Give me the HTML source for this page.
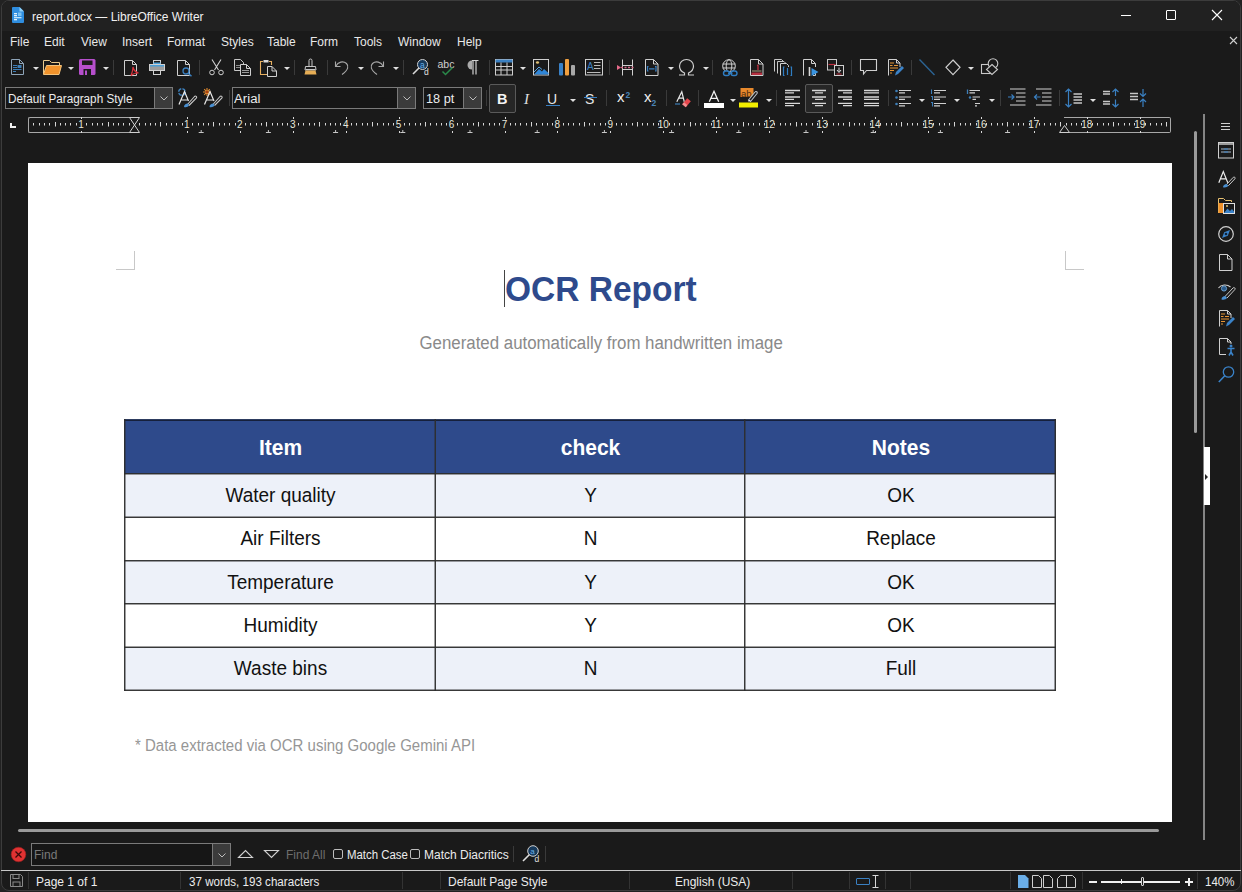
<!DOCTYPE html>
<html><head><meta charset="utf-8">
<style>
*{margin:0;padding:0;box-sizing:border-box}
html,body{width:1242px;height:892px;overflow:hidden;background:#222}
body{position:relative;font-family:"Liberation Sans",sans-serif;font-size:12px;color:#e6e6e6}
.a{position:absolute}
.t{position:absolute;white-space:pre;line-height:1}
#win{position:absolute;left:1px;top:0;width:1240px;height:891px;background:#1a1a1a;border:1px solid #3c3c3c;border-radius:8px;overflow:hidden}
#title{position:absolute;left:0;top:0;width:1242px;height:30px;background:#212121}
.menu{top:36px;font-size:12px;color:#e8e8e8}
.sep{position:absolute;width:1px;background:#3a3a3a}
.combo{position:absolute;border:1px solid #7a7a7a;background:#161616}
.dd{position:absolute;top:0;bottom:0;right:0;background:#3b3b3b;border-left:1px solid #7a7a7a}
.arr{position:absolute;width:0;height:0;border-left:3px solid transparent;border-right:3px solid transparent;border-top:3px solid #e0e0e0}
svg{position:absolute;overflow:visible}
.doc{font-family:"Liberation Sans",sans-serif;color:#000;transform:scaleY(1.055);transform-origin:50% 84.65%}
</style></head><body>
<div id="win">
  <div id="title"></div>
</div>
<div id="ui">
  <svg style="left:12px;top:7px" width="12" height="16" viewBox="0 0 12 16"><path d="M1 0h6.5L12 4.5V15a1 1 0 0 1-1 1H1a1 1 0 0 1-1-1V1a1 1 0 0 1 1-1z" fill="#2f8ee0"/><path d="M7.5 0V4.5H12z" fill="#8fd0f8"/><rect x="2" y="6" width="3" height="1.3" fill="#e0f2fe"/><rect x="2" y="8" width="3" height="1.3" fill="#e0f2fe"/><rect x="2" y="10" width="7.5" height="1.3" fill="#bfe4fc"/><rect x="2" y="12" width="3" height="1.3" fill="#e0f2fe"/><rect x="6" y="5.5" width="3.5" height="3.5" fill="#8fd0f8" opacity="0.8"/></svg>
  <div class="t" style="left:32px;top:11px;font-size:12px;color:#f0f0f0">report.docx — LibreOffice Writer</div>
  <div class="a" style="left:1121px;top:15px;width:10px;height:1px;background:#fff"></div>
  <div class="a" style="left:1166px;top:10px;width:10px;height:10px;border:1px solid #fff;border-radius:1px"></div>
  <svg style="left:1212px;top:10px" width="10" height="10"><path d="M0 0L10 10M10 0L0 10" stroke="#fff" stroke-width="1.1"/></svg>
  <svg style="left:1230px;top:37px" width="7" height="7"><path d="M0 0L7 7M7 0L0 7" stroke="#cfcfcf" stroke-width="1.1"/></svg>
  <div class="t menu" style="left:10px">File</div>
  <div class="t menu" style="left:44px">Edit</div>
  <div class="t menu" style="left:81px">View</div>
  <div class="t menu" style="left:122px">Insert</div>
  <div class="t menu" style="left:167px">Format</div>
  <div class="t menu" style="left:221px">Styles</div>
  <div class="t menu" style="left:267px">Table</div>
  <div class="t menu" style="left:310px">Form</div>
  <div class="t menu" style="left:354px">Tools</div>
  <div class="t menu" style="left:398px">Window</div>
  <div class="t menu" style="left:457px">Help</div>
  <!-- TOOLBAR 1 -->
  <svg style="left:11px;top:59px" width="14" height="17" viewBox="0 0 14 17" fill="none"><path d="M0.5 0.5H8.5L12.5 4.5V15.5H0.5Z" stroke="#8ea4b8"/><path d="M8.5 0.5V4.5H12.5" stroke="#8ea4b8"/><path d="M2 6.5H6M2 8.5H6M2 10.5H10.5M2 12.5H5" stroke="#3d7eb8" stroke-width="1"/><rect x="6.5" y="6" width="4" height="3" fill="#3d7eb8"/></svg>
  <div class="arr" style="left:33px;top:67px"></div>
  <svg style="left:43px;top:60px" width="19" height="15" viewBox="0 0 19 15" fill="none"><path d="M0.5 14V0.5H6.5L8.5 2.5H16.5V5" stroke="#e9c98c"/><path d="M3.5 5.5H18.5L16 14.5H0.5Z" fill="#f0922b" stroke="#f3c27a"/></svg>
  <div class="arr" style="left:68px;top:67px"></div>
  <svg style="left:79px;top:59px" width="17" height="17" viewBox="0 0 17 17"><rect x="0" y="0" width="16.5" height="16" rx="1.5" fill="#b64fcc"/><rect x="3" y="1.5" width="10.5" height="4.5" fill="#1b1b1b"/><rect x="4.5" y="10" width="7.5" height="6" fill="#1b1b1b"/><rect x="6" y="11.5" width="2" height="4.5" fill="#b64fcc"/></svg>
  <div class="arr" style="left:103px;top:67px"></div>
  <div class="sep" style="left:113px;top:60px;height:15px"></div>
  <svg style="left:124px;top:60px" width="15" height="16" viewBox="0 0 15 16" fill="none"><path d="M0.5 0.5H8.5L12.5 4.5V15.5H0.5Z" stroke="#d0d0d0"/><path d="M8.5 0.5V4.5H12.5" stroke="#d0d0d0"/><path d="M9 7C9.5 9 11 12 14.5 13C12 13 9 13.5 7 15.5C8 13 9 10 9 7Z" stroke="#d8313b" stroke-width="1.2"/></svg>
  <svg style="left:149px;top:60px" width="16" height="15" viewBox="0 0 16 15" fill="none"><rect x="4.5" y="0.5" width="7" height="4" stroke="#d0d0d0"/><rect x="4.5" y="2.5" width="7" height="2" fill="#4a9fd8"/><rect x="0.5" y="4.5" width="15" height="6" fill="#9c9c9c" stroke="#d0d0d0"/><rect x="1" y="5" width="14" height="1.5" fill="#4a9fd8"/><rect x="4.5" y="10.5" width="7" height="4" stroke="#d0d0d0"/></svg>
  <svg style="left:177px;top:60px" width="16" height="17" viewBox="0 0 16 17" fill="none"><path d="M0.5 0.5H8.5L12.5 4.5V15.5H0.5Z" stroke="#d0d0d0"/><path d="M8.5 0.5V4.5H12.5" stroke="#d0d0d0"/><circle cx="9" cy="11" r="3" stroke="#3a80c2" stroke-width="1.3" fill="#1b1b1b"/><path d="M11.2 13.2L14.5 16.3" stroke="#3a80c2" stroke-width="1.5"/></svg>
  <div class="sep" style="left:199px;top:60px;height:15px"></div>
  <svg style="left:209px;top:59px" width="15" height="17" viewBox="0 0 15 17" fill="none"><path d="M3 0.5L9.5 11M12 0.5L5.5 11" stroke="#d0d0d0" stroke-width="1.1"/><circle cx="3" cy="13.5" r="2.3" stroke="#d0d0d0"/><circle cx="12" cy="13.5" r="2.3" stroke="#d0d0d0"/></svg>
  <svg style="left:234px;top:59px" width="17" height="17" viewBox="0 0 17 17" fill="none"><path d="M0.5 0.5H6.5L9.5 3.5V11.5H0.5Z" stroke="#c8c8c8"/><rect x="2" y="6" width="5" height="1" fill="#8a8a8a"/><rect x="2" y="8" width="5" height="1" fill="#8a8a8a"/><path d="M6.5 5.5H12.5L16.5 9.5V16.5H6.5Z" fill="#1b1b1b" stroke="#d0d0d0"/><path d="M12.5 5.5V9.5H16.5" stroke="#d0d0d0"/><rect x="8" y="11" width="7" height="1" fill="#9a9a9a"/><rect x="8" y="13" width="7" height="1" fill="#9a9a9a"/></svg>
  <svg style="left:260px;top:59px" width="17" height="18" viewBox="0 0 17 18" fill="none"><path d="M3 2.5H0.5V15.5H7M11.5 6V2.5H9" stroke="#e8b060" stroke-width="1.1"/><rect x="3.5" y="1" width="5" height="2.5" fill="#d8d8d8"/><path d="M7.5 7.5H12L16.5 12V17.5H7.5Z" fill="#1b1b1b" stroke="#d0d0d0"/><path d="M12 7.5V12H16.5" stroke="#d0d0d0"/></svg>
  <div class="arr" style="left:284px;top:67px"></div>
  <div class="sep" style="left:294px;top:60px;height:15px"></div>
  <svg style="left:304px;top:58px" width="13" height="18" viewBox="0 0 13 18" fill="none"><path d="M5 8V2.5A1.5 1.5 0 0 1 8 2.5V8" stroke="#c8c8c8"/><path d="M1.5 8.5H11.5L12 12H1Z" stroke="#c8c8c8"/><path d="M1.5 12.5L0.5 16.5H12.5L11.5 12.5Z" fill="#e6ad55"/><rect x="2" y="11" width="9" height="1" fill="#c8c8c8"/></svg>
  <div class="sep" style="left:327px;top:60px;height:15px"></div>
  <svg style="left:334px;top:60px" width="15" height="15" viewBox="0 0 15 15" fill="none"><path d="M1.5 1.5V6.5H6.5" stroke="#a8a8a8" stroke-width="1.1"/><path d="M1.8 6.2C4 2 9 0.5 12.5 3.5C15 6 14.5 9.5 8 14.5" stroke="#a8a8a8" stroke-width="1.1"/></svg>
  <div class="arr" style="left:358px;top:67px"></div>
  <svg style="left:370px;top:60px" width="15" height="15" viewBox="0 0 15 15" fill="none"><path d="M13.5 1.5V6.5H8.5" stroke="#a8a8a8" stroke-width="1.1"/><path d="M13.2 6.2C11 2 6 0.5 2.5 3.5C0 6 0.5 9.5 7 14.5" stroke="#a8a8a8" stroke-width="1.1"/></svg>
  <div class="arr" style="left:393px;top:67px"></div>
  <div class="sep" style="left:403px;top:60px;height:15px"></div>
  <svg style="left:412px;top:59px" width="18" height="17" viewBox="0 0 18 17" fill="none"><circle cx="10.5" cy="5.5" r="5" stroke="#d0d0d0" fill="#173a5c"/><path d="M7 9L1 15" stroke="#d8d8d8" stroke-width="1.6"/><text x="8" y="8.5" font-size="8.5" fill="#6ab0e8" font-family="Liberation Sans">a</text><text x="12" y="16" font-size="8.5" fill="#e0e0e0" font-family="Liberation Sans">d</text></svg>
  <svg style="left:437px;top:59px" width="18" height="17" viewBox="0 0 18 17" fill="none"><text x="0.5" y="8.5" font-size="10.5" fill="#d0d0d0" font-family="Liberation Sans">abc</text><path d="M5.5 12.5L8.5 15.5L15.5 8.5" stroke="#2a8a4a" stroke-width="1.5"/></svg>
  <svg style="left:466px;top:60px" width="13" height="15" viewBox="0 0 13 15" fill="none"><path d="M6 0.5A4.5 4.5 0 0 0 6 9.5Z" fill="#aaaaaa"/><path d="M6 0.5H12.5M7 0.5V14.5M10 0.5V14.5" stroke="#d0d0d0" stroke-width="1.2"/></svg>
  <div class="sep" style="left:489px;top:60px;height:15px"></div>
  <svg style="left:495px;top:59px" width="18" height="17" viewBox="0 0 18 17" fill="none"><rect x="0.5" y="0.5" width="17" height="15.5" stroke="#cfcfcf"/><rect x="0.5" y="0.5" width="17" height="3" fill="#3a80c2"/><path d="M0.5 7.5H17.5M0.5 11H17.5M6 3.5V16M12 3.5V16" stroke="#cfcfcf"/></svg>
  <div class="arr" style="left:520px;top:67px"></div>
  <svg style="left:533px;top:59px" width="16" height="17" viewBox="0 0 16 17" fill="none"><rect x="0.5" y="0.5" width="15" height="15.5" stroke="#d0d0d0"/><path d="M1 15.5L6 10L9 12.5L11 10L15.5 14V15.5Z" fill="#2f86d8"/><path d="M1 13L6 8L9 10.5" stroke="#5aa8e8"/><ellipse cx="4.5" cy="3.5" rx="1.6" ry="1.2" fill="#e0c074"/></svg>
  <svg style="left:559px;top:59px" width="16" height="17" viewBox="0 0 16 17"><rect x="0" y="4" width="4" height="12.5" rx="1" fill="#3a82c8"/><rect x="6" y="0" width="4" height="16.5" rx="1" fill="#f0a040"/><rect x="12" y="6" width="4" height="10.5" rx="1" fill="#a8a8a8"/></svg>
  <svg style="left:585px;top:59px" width="18" height="17" viewBox="0 0 18 17" fill="none"><rect x="0.5" y="0.5" width="17" height="15.5" stroke="#d0d0d0"/><text x="2" y="11" font-size="10" fill="#3a80c2" font-family="Liberation Sans">A</text><path d="M9 3.5H15.5M9 6.5H15.5M9 9.5H15.5M2 13.5H15.5" stroke="#bbbbbb"/></svg>
  <div class="sep" style="left:609px;top:60px;height:15px"></div>
  <svg style="left:617px;top:59px" width="18" height="17" viewBox="0 0 18 17" fill="none"><path d="M5.5 0.5V16.5M15.5 0.5V16.5M5.5 6.5H15.5M5.5 10.5H15.5" stroke="#d0d0d0"/><path d="M0 6L4 8.5L0 11Z" fill="#e66a8a"/><path d="M4 8.5H17" stroke="#d06080" stroke-width="1.5" stroke-dasharray="2 1.5"/></svg>
  <svg style="left:645px;top:59px" width="14" height="17" viewBox="0 0 14 17" fill="none"><path d="M0.5 0.5H8.5L13 5V16.5H0.5Z" stroke="#d0d0d0"/><path d="M8.5 0.5V5H13" stroke="#d0d0d0"/><path d="M3.5 7.5H2.5V12H3.5M10 7.5H11V12H10M4 9.8H9.5" stroke="#3a80c2" stroke-width="1.2"/></svg>
  <div class="arr" style="left:668px;top:67px"></div>
  <svg style="left:678px;top:59px" width="17" height="17" viewBox="0 0 17 17" fill="none"><path d="M1 16H6.5V14C3 12.5 1.5 10 1.5 7A7 6.5 0 0 1 15.5 7C15.5 10 14 12.5 10.5 14V16H16" stroke="#d0d0d0" stroke-width="1.2"/></svg>
  <div class="arr" style="left:703px;top:67px"></div>
  <div class="sep" style="left:712px;top:60px;height:15px"></div>
  <svg style="left:721px;top:59px" width="19" height="18" viewBox="0 0 19 18" fill="none"><circle cx="8" cy="7" r="6.3" stroke="#d0d0d0"/><ellipse cx="8" cy="7" rx="2.8" ry="6.3" stroke="#d0d0d0"/><path d="M1.7 5H14.3M1.7 9H14.3" stroke="#d0d0d0"/><rect x="2.5" y="12" width="6" height="4.5" rx="2.2" fill="#1b1b1b" stroke="#2f7ec4" stroke-width="1.4"/><rect x="10" y="12" width="6" height="4.5" rx="2.2" stroke="#2f7ec4" stroke-width="1.4"/><path d="M7 14.3H11.5" stroke="#2f7ec4" stroke-width="1.3"/></svg>
  <svg style="left:750px;top:59px" width="14" height="17" viewBox="0 0 14 17" fill="none"><path d="M0.5 0.5H8.5L13 5V16.5H0.5Z" stroke="#d0d0d0"/><path d="M8.5 0.5V5H13" stroke="#d0d0d0"/><path d="M8 6V11M7 6.5L8 6" stroke="#c03040" stroke-width="1.3"/><rect x="2" y="11.5" width="9.5" height="1" fill="#b0a080"/><rect x="1.5" y="13.5" width="10.5" height="2.5" fill="#b53040"/></svg>
  <svg style="left:774px;top:59px" width="19" height="18" viewBox="0 0 19 18" fill="none"><path d="M0.5 12.5V0.5H7.5L9 2" stroke="#c8c8c8"/><path d="M3.5 14.5V2.5H10L11.5 4" stroke="#c8c8c8"/><path d="M6.5 16.5V4.5H12.5L14.5 6.5V8" stroke="#d0d0d0"/><path d="M10.5 8H9.5V16.5H10.5M16.5 8H17.5V16.5H16.5M13.5 9V16" stroke="#2f7ec4" stroke-width="1.2"/></svg>
  <svg style="left:803px;top:59px" width="16" height="17" viewBox="0 0 16 17" fill="none"><path d="M0.5 16.5V0.5H8.5L12.5 4.5V8M12.5 14V16.5H10" stroke="#d0d0d0"/><path d="M8.5 0.5V4.5H12.5" stroke="#d0d0d0"/><path d="M6.5 8V17" stroke="#d8d8d8" stroke-width="1.6"/><path d="M8.5 9L15.5 13L8.5 17Z" fill="#3a94e0"/></svg>
  <svg style="left:827px;top:59px" width="17" height="17" viewBox="0 0 17 17" fill="none"><rect x="0.5" y="0.5" width="9" height="10.5" stroke="#c8c8c8"/><path d="M1.5 5.5H8.5" stroke="#c03040" stroke-width="1.2"/><rect x="7.5" y="6.5" width="9" height="10" fill="#1b1b1b" stroke="#d0d0d0"/><path d="M12 8.5V12.5M10 11L12 13.5L14 11" stroke="#e0e0e0"/><path d="M9.5 15H14.5" stroke="#c03040"/></svg>
  <div class="sep" style="left:851px;top:60px;height:15px"></div>
  <svg style="left:860px;top:59px" width="17" height="16" viewBox="0 0 17 16" fill="none"><path d="M0.5 0.5H16.5V11.5H6.5L3.5 15V11.5H0.5Z" stroke="#d0d0d0" stroke-width="1.1"/></svg>
  <svg style="left:888px;top:59px" width="17" height="18" viewBox="0 0 17 18" fill="none"><path d="M0.5 16.5V0.5H8.5L12 4V8" stroke="#d0d0d0"/><path d="M8.5 0.5V4H12" stroke="#d0d0d0"/><path d="M2 4H6M2 6.5H4.5M6 6.5H10M2 9H10M2 11.5H6M2 14H4" stroke="#e69535"/><path d="M7 16.5L8 13L14 7L16 9L10 15Z" fill="#3a82c8"/></svg>
  <div class="sep" style="left:911px;top:60px;height:15px"></div>
  <svg style="left:919px;top:59px" width="16" height="17" viewBox="0 0 16 17" fill="none"><path d="M0.5 0.5L15.5 16" stroke="#2c6494" stroke-width="1.4"/></svg>
  <svg style="left:945px;top:59px" width="16" height="17" viewBox="0 0 16 17" fill="none"><path d="M8 1L15 8.3L8 15.6L1 8.3Z" stroke="#d0d0d0" stroke-width="1.2"/></svg>
  <div class="arr" style="left:968px;top:67px"></div>
  <svg style="left:981px;top:58px" width="18" height="18" viewBox="0 0 18 18" fill="none"><rect x="0.5" y="6.5" width="10" height="9" stroke="#c8c8c8" stroke-width="1.1"/><circle cx="12" cy="5.5" r="4.8" fill="#1a1a1a" stroke="#c8c8c8" stroke-width="1.1"/><path d="M11 6.5L16.5 11.5L11 16.5L5.5 11.5Z" fill="#1a1a1a" stroke="#c8c8c8" stroke-width="1.1"/></svg>
  <!-- TOOLBAR 2 -->
  <div class="combo" style="left:5px;top:87px;width:168px;height:22px"><div class="dd" style="width:18px"><svg style="left:5px;top:8px" width="8" height="5"><path d="M0.5 0.5L4 4L7.5 0.5" stroke="#bdbdbd" fill="none"/></svg></div></div>
  <div class="t" style="left:8px;top:93px;color:#ececec;transform:scaleX(0.977);transform-origin:left">Default Paragraph Style</div>
  <svg style="left:178px;top:88px" width="20" height="20" viewBox="0 0 20 20" fill="none"><circle cx="4" cy="4" r="3.3" stroke="#3d7eb8" stroke-width="1.4" stroke-dasharray="4 1.2"/><path d="M1 16.5L6.5 3.5L10.5 13M3.5 12H10" stroke="#e8e8e8" stroke-width="1.2"/><path d="M9 17L16.5 8.5A1.2 1.2 0 0 1 18.3 10.2L11 17.5" stroke="#c8c8c8" stroke-width="1.1"/><path d="M6 19C6 17 7.5 15.5 10 15.5L11 17.5C10 19 8 19.5 6 19Z" fill="#4a8fd0"/></svg>
  <svg style="left:203px;top:88px" width="20" height="20" viewBox="0 0 20 20" fill="none"><g stroke="#e08a30" stroke-width="1.1"><path d="M4 0V8M0 4H8M1.2 1.2L6.8 6.8M6.8 1.2L1.2 6.8"/></g><circle cx="4" cy="4" r="1.2" fill="#b04010"/><path d="M1.5 16.5L7 3.5L11 13M4 12H10.5" stroke="#e8e8e8" stroke-width="1.2"/><path d="M9.5 17L17 8.5A1.2 1.2 0 0 1 18.8 10.2L11.5 17.5" stroke="#c8c8c8" stroke-width="1.1"/><path d="M6.5 19C6.5 17 8 15.5 10.5 15.5L11.5 17.5C10.5 19 8.5 19.5 6.5 19Z" fill="#4a8fd0"/></svg>
  <div class="sep" style="left:229px;top:90px;height:16px"></div>
  <div class="combo" style="left:232px;top:87px;width:184px;height:22px"><div class="dd" style="width:18px"><svg style="left:5px;top:8px" width="8" height="5"><path d="M0.5 0.5L4 4L7.5 0.5" stroke="#bdbdbd" fill="none"/></svg></div></div>
  <div class="t" style="left:234px;top:93px;color:#ececec;transform:scaleX(1.1);transform-origin:left">Arial</div>
  <div class="combo" style="left:423px;top:87px;width:59px;height:22px"><div class="dd" style="width:18px"><svg style="left:5px;top:8px" width="8" height="5"><path d="M0.5 0.5L4 4L7.5 0.5" stroke="#bdbdbd" fill="none"/></svg></div></div>
  <div class="t" style="left:425.5px;top:93px;color:#ececec;transform:scaleX(1.06);transform-origin:left">18 pt</div>
  <div class="sep" style="left:486px;top:90px;height:16px"></div>
  <div class="a" style="left:489px;top:84px;width:27px;height:29px;background:#262626;border:1px solid #5a5a5a;border-radius:2px"></div>
  <div class="t" style="left:497px;top:92px;font-size:14.5px;font-weight:700;color:#f4f4f4">B</div>
  <div class="t" style="left:524px;top:92px;font-size:15px;font-style:italic;font-family:'Liberation Serif';color:#e0e0e0">I</div>
  <div class="t" style="left:547px;top:92px;font-size:14px;color:#e8e8e8">U</div>
  <div class="a" style="left:546px;top:105px;width:14px;height:1px;background:#3a80c2"></div>
  <div class="arr" style="left:570px;top:99px"></div>
  <div class="t" style="left:585px;top:92px;font-size:14px;color:#e8e8e8">S</div>
  <div class="a" style="left:584px;top:97px;width:13px;height:1px;background:#3a80c2"></div>
  <div class="sep" style="left:606px;top:90px;height:16px"></div>
  <div class="t" style="left:617px;top:89px;font-size:15px;color:#f0f0f0">x</div>
  <div class="t" style="left:625.5px;top:90.5px;font-size:8.5px;font-weight:700;color:#4a84b8">2</div>
  <div class="t" style="left:644px;top:89px;font-size:15px;color:#f0f0f0">x</div>
  <div class="t" style="left:651.5px;top:98.5px;font-size:8.5px;font-weight:700;color:#4a84b8">2</div>
  <div class="sep" style="left:666px;top:90px;height:16px"></div>
  <svg style="left:675px;top:91px" width="17" height="17" viewBox="0 0 17 17" fill="none"><path d="M1.8 10.8L6.8 0.8L9.3 10.8M3.8 7.2H8.8" stroke="#e8e8e8" stroke-width="1.2"/><path d="M0 13H5" stroke="#3d7eb8" stroke-width="1.2"/><path d="M7.2 13.3L12.2 7.2L15.8 10.2L10.8 16.2Z" fill="#e8474d"/><path d="M7.2 13.3L9 11.2L12.3 14L10.8 16.2Z" fill="#f29090"/></svg>
  <div class="sep" style="left:698px;top:90px;height:16px"></div>
  <svg style="left:704px;top:89px" width="21" height="20" viewBox="0 0 21 20" fill="none"><path d="M5.3 12.8L10 2.3L14.7 12.8M7 9.3H13" stroke="#f0f0f0" stroke-width="1.3"/><rect x="0" y="14" width="20" height="5" fill="#ffffff"/></svg>
  <div class="arr" style="left:730px;top:99px"></div>
  <svg style="left:739px;top:88px" width="21" height="21" viewBox="0 0 21 21" fill="none"><rect x="1.5" y="0" width="13" height="9" fill="#e8892c"/><text x="2" y="8.5" font-size="9.5" fill="#4a2a10" font-family="Liberation Sans">ab</text><path d="M9.5 12L16 4A1.2 1.2 0 0 1 18 5.5L11.5 13.5Z" stroke="#b8c0c8" stroke-width="1.1" fill="#1b1b1b"/><path d="M9 13.5L10 11.5L11.5 13Z" fill="#f0f0f0"/><rect x="0" y="14.5" width="19" height="5" fill="#f2ee00"/></svg>
  <div class="arr" style="left:766px;top:99px"></div>
  <div class="sep" style="left:776px;top:90px;height:16px"></div>
  <svg style="left:785px;top:89px" width="16" height="18" viewBox="0 0 16 18" fill="none" stroke="#d8d8d8" stroke-width="1.3"><path d="M0 1.5H15M0 3.8H9M0 8H15M0 10.4H9M0 14.4H15M0 16.7H9"/></svg>
  <div class="a" style="left:805px;top:84px;width:28px;height:29px;background:#262626;border:1px solid #5a5a5a;border-radius:2px"></div>
  <svg style="left:812px;top:89px" width="15" height="18" viewBox="0 0 15 18" fill="none" stroke="#d8d8d8" stroke-width="1.3"><path d="M0 1.5H14M3 3.8H11M0 8H14M3 10.4H11M0 14.4H14M3 16.7H11"/></svg>
  <svg style="left:838px;top:89px" width="15" height="18" viewBox="0 0 15 18" fill="none" stroke="#d8d8d8" stroke-width="1.3"><path d="M0 1.5H14M5 3.8H14M0 8H14M5 10.4H14M0 14.4H14M5 16.7H14"/></svg>
  <svg style="left:864px;top:89px" width="16" height="18" viewBox="0 0 16 18" fill="none" stroke="#d8d8d8" stroke-width="1.3"><path d="M0 1.5H15M0 3.8H15M0 8H15M0 10.4H15M0 14.4H15M0 16.7H15"/></svg>
  <div class="sep" style="left:888px;top:90px;height:16px"></div>
  <svg style="left:895px;top:89px" width="17" height="18" viewBox="0 0 17 18" fill="none"><circle cx="1.5" cy="2" r="1.3" fill="#3d7eb8"/><circle cx="1.5" cy="8.5" r="1.3" fill="#3d7eb8"/><circle cx="1.5" cy="15" r="1.3" fill="#3d7eb8"/><path d="M4 1.5H16M4 3.8H10M4 8H16M4 10.3H10M4 14.5H16M4 16.8H10" stroke="#d0d0d0" stroke-width="1.2"/></svg>
  <div class="arr" style="left:919px;top:99px"></div>
  <svg style="left:930px;top:89px" width="17" height="18" viewBox="0 0 17 18" fill="none"><path d="M1.5 0.5V5M1 7.5H2.5V11M1 13.5H2.5V17.5" stroke="#3d7eb8" stroke-width="1.1"/><path d="M4 1.5H16M4 3.8H10M4 8H16M4 10.3H10M4 14.5H16M4 16.8H10" stroke="#d0d0d0" stroke-width="1.2"/></svg>
  <div class="arr" style="left:954px;top:99px"></div>
  <svg style="left:966px;top:89px" width="16" height="18" viewBox="0 0 16 18" fill="none"><path d="M1.5 0.5V5" stroke="#3d7eb8" stroke-width="1.3"/><circle cx="4" cy="8.5" r="1.2" fill="#3d7eb8"/><path d="M3.5 1.5H14M3.5 3.8H9M6.5 8H14M6.5 10.3H10M9 14.5H14M9 16.8H11" stroke="#d0d0d0" stroke-width="1.2"/></svg>
  <div class="arr" style="left:989px;top:99px"></div>
  <div class="sep" style="left:1000px;top:90px;height:16px"></div>
  <svg style="left:1008px;top:88px" width="18" height="19" viewBox="0 0 18 19" fill="none"><path d="M2 1H17.5M8 5H17.5M8 9H17.5M8 13H17.5M2 17H17.5" stroke="#d0d0d0" stroke-width="1.2"/><path d="M0 9H6M3.5 6.5L6 9L3.5 11.5" stroke="#3a80c2" stroke-width="1.2"/></svg>
  <svg style="left:1034px;top:88px" width="18" height="19" viewBox="0 0 18 19" fill="none"><path d="M2 1H17.5M8 5H17.5M8 9H17.5M8 13H17.5M2 17H17.5" stroke="#d0d0d0" stroke-width="1.2"/><path d="M0.5 9H6.5M3 6.5L0.5 9L3 11.5" stroke="#3a80c2" stroke-width="1.2"/></svg>
  <div class="sep" style="left:1059px;top:90px;height:16px"></div>
  <svg style="left:1065px;top:88px" width="18" height="20" viewBox="0 0 18 20" fill="none"><path d="M3.5 1V19M0.5 4L3.5 1L6.5 4M0.5 16L3.5 19L6.5 16" stroke="#3a80c2" stroke-width="1.2"/><path d="M8.5 6H17M8.5 9H17M8.5 12H17M8.5 15H17" stroke="#c8c8c8" stroke-width="1.3"/></svg>
  <div class="arr" style="left:1090px;top:99px"></div>
  <svg style="left:1103px;top:88px" width="17" height="20" viewBox="0 0 17 20" fill="none"><path d="M0 3.5H7M0 6H7M0 13.5H7M0 16H7" stroke="#c8c8c8" stroke-width="1.3"/><path d="M12.5 1V8M9.5 4L12.5 1L15.5 4M12.5 11.5V19M9.5 16L12.5 19L15.5 16" stroke="#3a80c2" stroke-width="1.2"/></svg>
  <svg style="left:1130px;top:88px" width="18" height="20" viewBox="0 0 18 20" fill="none"><path d="M0 5.5H8M0 8.5H8M0 11.5H8" stroke="#c8c8c8" stroke-width="1.3"/><path d="M13 1V8.5M10 5.5L13 8.5L16 5.5M13 11V19M10 14L13 11L16 14" stroke="#3a80c2" stroke-width="1.2"/></svg>
  <!-- RULER -->
  <div class="a" style="left:10px;top:123px;width:2px;height:5px;background:#f0f0f0"></div><div class="a" style="left:10px;top:126px;width:6px;height:2px;background:#f0f0f0"></div>
  <div class="a" style="left:28px;top:117px;width:107px;height:16px;border:1px solid #a8a8a8;border-right:none;border-radius:2px 0 0 2px"></div>
  <div class="a" style="left:1064px;top:117px;width:107px;height:16px;border:1px solid #a8a8a8;border-left:none;border-radius:0 2px 2px 0"></div>
  <div class="t" style="left:78.1px;top:119.5px;font-size:10px;color:#e8e8dc;width:6px;text-align:center">1</div>
  <div class="t" style="left:183.9px;top:119.5px;font-size:10px;color:#e8e8dc;width:6px;text-align:center">1</div>
  <div class="t" style="left:236.9px;top:119.5px;font-size:10px;color:#e8e8dc;width:6px;text-align:center">2</div>
  <div class="t" style="left:289.8px;top:119.5px;font-size:10px;color:#e8e8dc;width:6px;text-align:center">3</div>
  <div class="t" style="left:342.7px;top:119.5px;font-size:10px;color:#e8e8dc;width:6px;text-align:center">4</div>
  <div class="t" style="left:395.6px;top:119.5px;font-size:10px;color:#e8e8dc;width:6px;text-align:center">5</div>
  <div class="t" style="left:448.6px;top:119.5px;font-size:10px;color:#e8e8dc;width:6px;text-align:center">6</div>
  <div class="t" style="left:501.5px;top:119.5px;font-size:10px;color:#e8e8dc;width:6px;text-align:center">7</div>
  <div class="t" style="left:554.4px;top:119.5px;font-size:10px;color:#e8e8dc;width:6px;text-align:center">8</div>
  <div class="t" style="left:607.4px;top:119.5px;font-size:10px;color:#e8e8dc;width:6px;text-align:center">9</div>
  <div class="t" style="left:657.8px;top:119.5px;font-size:10px;color:#e8e8dc;width:11px;text-align:center">10</div>
  <div class="t" style="left:710.7px;top:119.5px;font-size:10px;color:#e8e8dc;width:11px;text-align:center">11</div>
  <div class="t" style="left:763.7px;top:119.5px;font-size:10px;color:#e8e8dc;width:11px;text-align:center">12</div>
  <div class="t" style="left:816.6px;top:119.5px;font-size:10px;color:#e8e8dc;width:11px;text-align:center">13</div>
  <div class="t" style="left:869.5px;top:119.5px;font-size:10px;color:#e8e8dc;width:11px;text-align:center">14</div>
  <div class="t" style="left:922.5px;top:119.5px;font-size:10px;color:#e8e8dc;width:11px;text-align:center">15</div>
  <div class="t" style="left:975.4px;top:119.5px;font-size:10px;color:#e8e8dc;width:11px;text-align:center">16</div>
  <div class="t" style="left:1028.3px;top:119.5px;font-size:10px;color:#e8e8dc;width:11px;text-align:center">17</div>
  <div class="t" style="left:1081.2px;top:119.5px;font-size:10px;color:#e8e8dc;width:11px;text-align:center">18</div>
  <div class="t" style="left:1134.2px;top:119.5px;font-size:10px;color:#e8e8dc;width:11px;text-align:center">19</div>
  <svg style="left:0;top:0" width="1242" height="140"><g fill="#d8d8d8"><rect x="33" y="123" width="1" height="2.5"/><rect x="39" y="123" width="1" height="2.5"/><rect x="44" y="123" width="1" height="2.5"/><rect x="49" y="123" width="1" height="2.5"/><rect x="55" y="122" width="1" height="4.5"/><rect x="60" y="123" width="1" height="2.5"/><rect x="65" y="123" width="1" height="2.5"/><rect x="70" y="123" width="1" height="2.5"/><rect x="76" y="123" width="1" height="2.5"/><rect x="81" y="117" width="1" height="2"/><rect x="81" y="131" width="1" height="2"/><rect x="86" y="123" width="1" height="2.5"/><rect x="92" y="123" width="1" height="2.5"/><rect x="97" y="123" width="1" height="2.5"/><rect x="102" y="123" width="1" height="2.5"/><rect x="108" y="122" width="1" height="4.5"/><rect x="113" y="123" width="1" height="2.5"/><rect x="118" y="123" width="1" height="2.5"/><rect x="123" y="123" width="1" height="2.5"/><rect x="129" y="123" width="1" height="2.5"/><rect x="139" y="123" width="1" height="2.5"/><rect x="145" y="123" width="1" height="2.5"/><rect x="150" y="123" width="1" height="2.5"/><rect x="155" y="123" width="1" height="2.5"/><rect x="160" y="122" width="1" height="4.5"/><rect x="166" y="123" width="1" height="2.5"/><rect x="171" y="123" width="1" height="2.5"/><rect x="176" y="123" width="1" height="2.5"/><rect x="182" y="123" width="1" height="2.5"/><rect x="187" y="117" width="1" height="2"/><rect x="187" y="131" width="1" height="2"/><rect x="192" y="123" width="1" height="2.5"/><rect x="198" y="123" width="1" height="2.5"/><rect x="203" y="123" width="1" height="2.5"/><rect x="208" y="123" width="1" height="2.5"/><rect x="213" y="122" width="1" height="4.5"/><rect x="219" y="123" width="1" height="2.5"/><rect x="224" y="123" width="1" height="2.5"/><rect x="229" y="123" width="1" height="2.5"/><rect x="235" y="123" width="1" height="2.5"/><rect x="240" y="117" width="1" height="2"/><rect x="240" y="131" width="1" height="2"/><rect x="245" y="123" width="1" height="2.5"/><rect x="250" y="123" width="1" height="2.5"/><rect x="256" y="123" width="1" height="2.5"/><rect x="261" y="123" width="1" height="2.5"/><rect x="266" y="122" width="1" height="4.5"/><rect x="272" y="123" width="1" height="2.5"/><rect x="277" y="123" width="1" height="2.5"/><rect x="282" y="123" width="1" height="2.5"/><rect x="287" y="123" width="1" height="2.5"/><rect x="293" y="117" width="1" height="2"/><rect x="293" y="131" width="1" height="2"/><rect x="298" y="123" width="1" height="2.5"/><rect x="303" y="123" width="1" height="2.5"/><rect x="309" y="123" width="1" height="2.5"/><rect x="314" y="123" width="1" height="2.5"/><rect x="319" y="122" width="1" height="4.5"/><rect x="325" y="123" width="1" height="2.5"/><rect x="330" y="123" width="1" height="2.5"/><rect x="335" y="123" width="1" height="2.5"/><rect x="340" y="123" width="1" height="2.5"/><rect x="346" y="117" width="1" height="2"/><rect x="346" y="131" width="1" height="2"/><rect x="351" y="123" width="1" height="2.5"/><rect x="356" y="123" width="1" height="2.5"/><rect x="362" y="123" width="1" height="2.5"/><rect x="367" y="123" width="1" height="2.5"/><rect x="372" y="122" width="1" height="4.5"/><rect x="377" y="123" width="1" height="2.5"/><rect x="383" y="123" width="1" height="2.5"/><rect x="388" y="123" width="1" height="2.5"/><rect x="393" y="123" width="1" height="2.5"/><rect x="399" y="117" width="1" height="2"/><rect x="399" y="131" width="1" height="2"/><rect x="404" y="123" width="1" height="2.5"/><rect x="409" y="123" width="1" height="2.5"/><rect x="415" y="123" width="1" height="2.5"/><rect x="420" y="123" width="1" height="2.5"/><rect x="425" y="122" width="1" height="4.5"/><rect x="430" y="123" width="1" height="2.5"/><rect x="436" y="123" width="1" height="2.5"/><rect x="441" y="123" width="1" height="2.5"/><rect x="446" y="123" width="1" height="2.5"/><rect x="452" y="117" width="1" height="2"/><rect x="452" y="131" width="1" height="2"/><rect x="457" y="123" width="1" height="2.5"/><rect x="462" y="123" width="1" height="2.5"/><rect x="467" y="123" width="1" height="2.5"/><rect x="473" y="123" width="1" height="2.5"/><rect x="478" y="122" width="1" height="4.5"/><rect x="483" y="123" width="1" height="2.5"/><rect x="489" y="123" width="1" height="2.5"/><rect x="494" y="123" width="1" height="2.5"/><rect x="499" y="123" width="1" height="2.5"/><rect x="505" y="117" width="1" height="2"/><rect x="505" y="131" width="1" height="2"/><rect x="510" y="123" width="1" height="2.5"/><rect x="515" y="123" width="1" height="2.5"/><rect x="520" y="123" width="1" height="2.5"/><rect x="526" y="123" width="1" height="2.5"/><rect x="531" y="122" width="1" height="4.5"/><rect x="536" y="123" width="1" height="2.5"/><rect x="542" y="123" width="1" height="2.5"/><rect x="547" y="123" width="1" height="2.5"/><rect x="552" y="123" width="1" height="2.5"/><rect x="557" y="117" width="1" height="2"/><rect x="557" y="131" width="1" height="2"/><rect x="563" y="123" width="1" height="2.5"/><rect x="568" y="123" width="1" height="2.5"/><rect x="573" y="123" width="1" height="2.5"/><rect x="579" y="123" width="1" height="2.5"/><rect x="584" y="122" width="1" height="4.5"/><rect x="589" y="123" width="1" height="2.5"/><rect x="594" y="123" width="1" height="2.5"/><rect x="600" y="123" width="1" height="2.5"/><rect x="605" y="123" width="1" height="2.5"/><rect x="610" y="117" width="1" height="2"/><rect x="610" y="131" width="1" height="2"/><rect x="616" y="123" width="1" height="2.5"/><rect x="621" y="123" width="1" height="2.5"/><rect x="626" y="123" width="1" height="2.5"/><rect x="632" y="123" width="1" height="2.5"/><rect x="637" y="122" width="1" height="4.5"/><rect x="642" y="123" width="1" height="2.5"/><rect x="647" y="123" width="1" height="2.5"/><rect x="653" y="123" width="1" height="2.5"/><rect x="658" y="123" width="1" height="2.5"/><rect x="663" y="117" width="1" height="2"/><rect x="663" y="131" width="1" height="2"/><rect x="669" y="123" width="1" height="2.5"/><rect x="674" y="123" width="1" height="2.5"/><rect x="679" y="123" width="1" height="2.5"/><rect x="684" y="123" width="1" height="2.5"/><rect x="690" y="122" width="1" height="4.5"/><rect x="695" y="123" width="1" height="2.5"/><rect x="700" y="123" width="1" height="2.5"/><rect x="706" y="123" width="1" height="2.5"/><rect x="711" y="123" width="1" height="2.5"/><rect x="716" y="117" width="1" height="2"/><rect x="716" y="131" width="1" height="2"/><rect x="722" y="123" width="1" height="2.5"/><rect x="727" y="123" width="1" height="2.5"/><rect x="732" y="123" width="1" height="2.5"/><rect x="737" y="123" width="1" height="2.5"/><rect x="743" y="122" width="1" height="4.5"/><rect x="748" y="123" width="1" height="2.5"/><rect x="753" y="123" width="1" height="2.5"/><rect x="759" y="123" width="1" height="2.5"/><rect x="764" y="123" width="1" height="2.5"/><rect x="769" y="117" width="1" height="2"/><rect x="769" y="131" width="1" height="2"/><rect x="774" y="123" width="1" height="2.5"/><rect x="780" y="123" width="1" height="2.5"/><rect x="785" y="123" width="1" height="2.5"/><rect x="790" y="123" width="1" height="2.5"/><rect x="796" y="122" width="1" height="4.5"/><rect x="801" y="123" width="1" height="2.5"/><rect x="806" y="123" width="1" height="2.5"/><rect x="812" y="123" width="1" height="2.5"/><rect x="817" y="123" width="1" height="2.5"/><rect x="822" y="117" width="1" height="2"/><rect x="822" y="131" width="1" height="2"/><rect x="827" y="123" width="1" height="2.5"/><rect x="833" y="123" width="1" height="2.5"/><rect x="838" y="123" width="1" height="2.5"/><rect x="843" y="123" width="1" height="2.5"/><rect x="849" y="122" width="1" height="4.5"/><rect x="854" y="123" width="1" height="2.5"/><rect x="859" y="123" width="1" height="2.5"/><rect x="864" y="123" width="1" height="2.5"/><rect x="870" y="123" width="1" height="2.5"/><rect x="875" y="117" width="1" height="2"/><rect x="875" y="131" width="1" height="2"/><rect x="880" y="123" width="1" height="2.5"/><rect x="886" y="123" width="1" height="2.5"/><rect x="891" y="123" width="1" height="2.5"/><rect x="896" y="123" width="1" height="2.5"/><rect x="901" y="122" width="1" height="4.5"/><rect x="907" y="123" width="1" height="2.5"/><rect x="912" y="123" width="1" height="2.5"/><rect x="917" y="123" width="1" height="2.5"/><rect x="923" y="123" width="1" height="2.5"/><rect x="928" y="117" width="1" height="2"/><rect x="928" y="131" width="1" height="2"/><rect x="933" y="123" width="1" height="2.5"/><rect x="939" y="123" width="1" height="2.5"/><rect x="944" y="123" width="1" height="2.5"/><rect x="949" y="123" width="1" height="2.5"/><rect x="954" y="122" width="1" height="4.5"/><rect x="960" y="123" width="1" height="2.5"/><rect x="965" y="123" width="1" height="2.5"/><rect x="970" y="123" width="1" height="2.5"/><rect x="976" y="123" width="1" height="2.5"/><rect x="981" y="117" width="1" height="2"/><rect x="981" y="131" width="1" height="2"/><rect x="986" y="123" width="1" height="2.5"/><rect x="991" y="123" width="1" height="2.5"/><rect x="997" y="123" width="1" height="2.5"/><rect x="1002" y="123" width="1" height="2.5"/><rect x="1007" y="122" width="1" height="4.5"/><rect x="1013" y="123" width="1" height="2.5"/><rect x="1018" y="123" width="1" height="2.5"/><rect x="1023" y="123" width="1" height="2.5"/><rect x="1029" y="123" width="1" height="2.5"/><rect x="1034" y="117" width="1" height="2"/><rect x="1034" y="131" width="1" height="2"/><rect x="1039" y="123" width="1" height="2.5"/><rect x="1044" y="123" width="1" height="2.5"/><rect x="1050" y="123" width="1" height="2.5"/><rect x="1055" y="123" width="1" height="2.5"/><rect x="1060" y="122" width="1" height="4.5"/><rect x="1066" y="123" width="1" height="2.5"/><rect x="1071" y="123" width="1" height="2.5"/><rect x="1076" y="123" width="1" height="2.5"/><rect x="1081" y="123" width="1" height="2.5"/><rect x="1087" y="117" width="1" height="2"/><rect x="1087" y="131" width="1" height="2"/><rect x="1092" y="123" width="1" height="2.5"/><rect x="1097" y="123" width="1" height="2.5"/><rect x="1103" y="123" width="1" height="2.5"/><rect x="1108" y="123" width="1" height="2.5"/><rect x="1113" y="122" width="1" height="4.5"/><rect x="1118" y="123" width="1" height="2.5"/><rect x="1124" y="123" width="1" height="2.5"/><rect x="1129" y="123" width="1" height="2.5"/><rect x="1134" y="123" width="1" height="2.5"/><rect x="1140" y="117" width="1" height="2"/><rect x="1140" y="131" width="1" height="2"/><rect x="1145" y="123" width="1" height="2.5"/><rect x="1150" y="123" width="1" height="2.5"/><rect x="1156" y="123" width="1" height="2.5"/><rect x="1161" y="123" width="1" height="2.5"/><rect x="1166" y="122" width="1" height="4.5"/></g>
  <path d="M198.7 132.5H203.7M201.2 130V132.5" stroke="#c8c8c8" stroke-width="1"/><path d="M265.9 132.5H270.9M268.4 130V132.5" stroke="#c8c8c8" stroke-width="1"/><path d="M333.1 132.5H338.1M335.6 130V132.5" stroke="#c8c8c8" stroke-width="1"/><path d="M400.3 132.5H405.3M402.8 130V132.5" stroke="#c8c8c8" stroke-width="1"/><path d="M467.5 132.5H472.5M470.0 130V132.5" stroke="#c8c8c8" stroke-width="1"/><path d="M534.7 132.5H539.7M537.2 130V132.5" stroke="#c8c8c8" stroke-width="1"/><path d="M601.9 132.5H606.9M604.4 130V132.5" stroke="#c8c8c8" stroke-width="1"/><path d="M669.1 132.5H674.1M671.6 130V132.5" stroke="#c8c8c8" stroke-width="1"/><path d="M736.3 132.5H741.3M738.8 130V132.5" stroke="#c8c8c8" stroke-width="1"/><path d="M803.5 132.5H808.5M806.0 130V132.5" stroke="#c8c8c8" stroke-width="1"/><path d="M870.7 132.5H875.7M873.2 130V132.5" stroke="#c8c8c8" stroke-width="1"/><path d="M937.9 132.5H942.9M940.4 130V132.5" stroke="#c8c8c8" stroke-width="1"/><path d="M1005.1 132.5H1010.1M1007.6 130V132.5" stroke="#c8c8c8" stroke-width="1"/>
  <path d="M129.5 117.5H139.5L134.5 125L139.5 132.5H129.5L134.5 125Z" fill="#1b1b1b" stroke="#d0d0d0" stroke-width="1"/>
  <path d="M1059.5 132.5H1069.5L1064.5 125.5Z" fill="#1b1b1b" stroke="#d0d0d0" stroke-width="1"/>
  </svg>
  <!-- DOCUMENT -->
  <div class="a" style="left:28px;top:163px;width:1144px;height:659px;background:#fff"></div>
  <!-- corner marks -->
  <div class="a" style="left:116px;top:269px;width:19px;height:1px;background:#c8c8c8"></div>
  <div class="a" style="left:134px;top:251px;width:1px;height:19px;background:#c8c8c8"></div>
  <div class="a" style="left:1065px;top:269px;width:19px;height:1px;background:#c8c8c8"></div>
  <div class="a" style="left:1065px;top:251px;width:1px;height:19px;background:#c8c8c8"></div>
  <!-- cursor -->
  <div class="a" style="left:504px;top:270px;width:1px;height:37px;background:#444"></div>
  <div class="t doc" style="left:505px;top:272.7px;font-size:33.5px;font-weight:700;color:#2e4a8c">OCR Report</div>
  <div class="t doc" style="left:419.5px;top:336px;font-size:16.85px;color:#8a8a8a">Generated automatically from handwritten image</div>
  <!-- table -->
  <div class="a" style="left:124px;top:419px;width:932px;height:272px;background:#fff"></div>
  <div class="a" style="left:124px;top:419px;width:932px;height:55px;background:#2e4a8b"></div>
  <div class="a" style="left:124px;top:474px;width:932px;height:43px;background:#edf1f9"></div>
  <div class="a" style="left:124px;top:560px;width:932px;height:44px;background:#edf1f9"></div>
  <div class="a" style="left:124px;top:647px;width:932px;height:43px;background:#edf1f9"></div>
  <div class="a" style="left:124px;top:419px;width:932px;height:1px;background:rgba(45,45,45,0.45)"></div>
  <div class="a" style="left:124px;top:420px;width:932px;height:1px;background:rgba(20,28,50,0.9)"></div>
  <div class="a" style="left:124px;top:473px;width:932px;height:1px;background:rgba(45,45,45,0.95)"></div>
  <div class="a" style="left:124px;top:474px;width:932px;height:1px;background:rgba(45,45,45,0.45)"></div>
  <div class="a" style="left:124px;top:516px;width:932px;height:1px;background:rgba(45,45,45,0.45)"></div>
  <div class="a" style="left:124px;top:517px;width:932px;height:1px;background:rgba(45,45,45,0.95)"></div>
  <div class="a" style="left:124px;top:560px;width:932px;height:1px;background:rgba(45,45,45,0.95)"></div>
  <div class="a" style="left:124px;top:561px;width:932px;height:1px;background:rgba(45,45,45,0.45)"></div>
  <div class="a" style="left:124px;top:603px;width:932px;height:1px;background:rgba(45,45,45,0.95)"></div>
  <div class="a" style="left:124px;top:604px;width:932px;height:1px;background:rgba(45,45,45,0.45)"></div>
  <div class="a" style="left:124px;top:646px;width:932px;height:1px;background:rgba(45,45,45,0.45)"></div>
  <div class="a" style="left:124px;top:647px;width:932px;height:1px;background:rgba(45,45,45,0.95)"></div>
  <div class="a" style="left:124px;top:689px;width:932px;height:1px;background:rgba(45,45,45,0.45)"></div>
  <div class="a" style="left:124px;top:690px;width:932px;height:1px;background:rgba(45,45,45,0.95)"></div>
  <div class="a" style="left:124px;top:419px;width:1px;height:272px;background:rgba(45,45,45,0.95)"></div>
  <div class="a" style="left:125px;top:419px;width:1px;height:272px;background:rgba(45,45,45,0.45)"></div>
  <div class="a" style="left:434px;top:419px;width:1px;height:272px;background:rgba(45,45,45,0.45)"></div>
  <div class="a" style="left:435px;top:419px;width:1px;height:272px;background:rgba(45,45,45,0.95)"></div>
  <div class="a" style="left:744px;top:419px;width:1px;height:272px;background:rgba(45,45,45,0.95)"></div>
  <div class="a" style="left:745px;top:419px;width:1px;height:272px;background:rgba(45,45,45,0.45)"></div>
  <div class="a" style="left:1054px;top:419px;width:1px;height:272px;background:rgba(45,45,45,0.45)"></div>
  <div class="a" style="left:1055px;top:419px;width:1px;height:272px;background:rgba(45,45,45,0.95)"></div>
  <div class="t doc" style="left:125.5px;width:310px;text-align:center;top:436.5px;font-size:21px;font-weight:700;color:#fff">Item</div>
  <div class="t doc" style="left:436px;width:309px;text-align:center;top:436.5px;font-size:21px;font-weight:700;color:#fff">check</div>
  <div class="t doc" style="left:746px;width:310px;text-align:center;top:436.5px;font-size:21px;font-weight:700;color:#fff">Notes</div>
  <div class="t doc" style="left:125.5px;width:310px;text-align:center;top:486px;font-size:19px;color:#111">Water quality</div>
  <div class="t doc" style="left:436px;width:309px;text-align:center;top:486px;font-size:19px;color:#111">Y</div>
  <div class="t doc" style="left:746px;width:310px;text-align:center;top:486px;font-size:19px;color:#111">OK</div>
  <div class="t doc" style="left:125.5px;width:310px;text-align:center;top:529px;font-size:19px;color:#111">Air Filters</div>
  <div class="t doc" style="left:436px;width:309px;text-align:center;top:529px;font-size:19px;color:#111">N</div>
  <div class="t doc" style="left:746px;width:310px;text-align:center;top:529px;font-size:19px;color:#111">Replace</div>
  <div class="t doc" style="left:125.5px;width:310px;text-align:center;top:573px;font-size:19px;color:#111">Temperature</div>
  <div class="t doc" style="left:436px;width:309px;text-align:center;top:573px;font-size:19px;color:#111">Y</div>
  <div class="t doc" style="left:746px;width:310px;text-align:center;top:573px;font-size:19px;color:#111">OK</div>
  <div class="t doc" style="left:125.5px;width:310px;text-align:center;top:616px;font-size:19px;color:#111">Humidity</div>
  <div class="t doc" style="left:436px;width:309px;text-align:center;top:616px;font-size:19px;color:#111">Y</div>
  <div class="t doc" style="left:746px;width:310px;text-align:center;top:616px;font-size:19px;color:#111">OK</div>
  <div class="t doc" style="left:125.5px;width:310px;text-align:center;top:658.7px;font-size:19px;color:#111">Waste bins</div>
  <div class="t doc" style="left:436px;width:309px;text-align:center;top:658.7px;font-size:19px;color:#111">N</div>
  <div class="t doc" style="left:746px;width:310px;text-align:center;top:658.7px;font-size:19px;color:#111">Full</div>
  <div class="t doc" style="left:135px;top:737.5px;font-size:15px;color:#969696">* Data extracted via OCR using Google Gemini API</div>
  <!-- SCROLLBARS + SIDEBAR -->
  <div class="a" style="left:1194px;top:131px;width:3px;height:302px;background:#9a9a9a;border-radius:1.5px"></div>
  <div class="a" style="left:18px;top:829px;width:1141px;height:3px;background:#9a9a9a;border-radius:1.5px"></div>
  <div class="a" style="left:1203px;top:114px;width:2px;height:726px;background:#858585"></div>
  <div class="a" style="left:1204px;top:447px;width:6px;height:58px;background:#fff"></div>
  <div class="a" style="left:1205px;top:474px;width:0;height:0;border-top:3px solid transparent;border-bottom:3px solid transparent;border-left:3px solid #222"></div>
  <!-- sidebar icons -->
  <svg style="left:1221px;top:123px" width="10" height="7"><path d="M0 0.5H9M0 3.5H9M0 6.5H9" stroke="#cfcfcf"/></svg>
  <svg style="left:1218px;top:142px" width="16" height="17" viewBox="0 0 16 17" fill="none"><rect x="0.5" y="0.5" width="15" height="15.5" stroke="#d0d0d0"/><rect x="1" y="1" width="14" height="2" fill="#9a9a9a"/><path d="M3 7H13M3 10H13" stroke="#a8b8c8" stroke-width="1.2"/><path d="M6 7H10M6 10H10" stroke="#3a80c2" stroke-width="1.2"/></svg>
  <svg style="left:1218px;top:170px" width="18" height="18" viewBox="0 0 18 18" fill="none"><path d="M0.8 12.8L5.3 1.5L9.8 12.8M2.6 8.8H8" stroke="#ececec" stroke-width="1.2"/><path d="M8.5 14.5L15.3 7.3A1.1 1.1 0 0 1 16.9 8.8L10.3 15.8" stroke="#c8c8c8" stroke-width="1"/><path d="M5 17.3C5 15.5 6.5 14 8.8 14L10.3 15.8C9.3 17.3 7.3 17.8 5 17.3Z" fill="#4a8fd0"/></svg>
  <svg style="left:1218px;top:198px" width="17" height="17" viewBox="0 0 17 17" fill="none"><path d="M0.5 15V0.5H5.5L7.5 2.5H13.5V4" stroke="#e8c070"/><rect x="0.5" y="5" width="6" height="10" fill="#f0922b"/><rect x="5.5" y="5.5" width="11" height="10" fill="#1b1b1b" stroke="#e0e0e0"/><path d="M6 15L9.5 10.5L12 13L14 11L16 13.5V15Z" fill="#3a82c8"/><circle cx="9" cy="8" r="1" fill="#e0c074"/></svg>
  <svg style="left:1218px;top:226px" width="16" height="16" viewBox="0 0 16 16" fill="none"><circle cx="8" cy="8" r="7.3" stroke="#d0d0d0" stroke-width="1.2"/><path d="M12 4L9.8 9.8L4 12L6.2 6.2Z" fill="#3a82c8"/><circle cx="8" cy="8" r="1.3" fill="#10243a"/></svg>
  <svg style="left:1219px;top:254px" width="14" height="17" viewBox="0 0 14 17" fill="none"><path d="M0.5 0.5H8.5L13 5V16.5H0.5Z" stroke="#d0d0d0"/><path d="M8.5 0.5V5H13" stroke="#d0d0d0"/></svg>
  <svg style="left:1218px;top:283px" width="18" height="17" viewBox="0 0 18 17" fill="none"><path d="M0.5 5C3 1.5 9 1 12.5 4" stroke="#d0d0d0" stroke-width="1.1"/><circle cx="6" cy="5.5" r="2.6" fill="#2a5a8a" stroke="#7ab0e0" stroke-width="0.8"/><path d="M7 13.5L15 5A1.2 1.2 0 0 1 16.8 6.6L9 15" stroke="#c8c8c8" stroke-width="1"/><path d="M3.5 16.5C3.5 14.5 5 13 7.5 13L9 15C8 16.5 6 17 3.5 16.5Z" fill="#4a8fd0"/></svg>
  <svg style="left:1219px;top:310px" width="17" height="17" viewBox="0 0 17 17" fill="none"><path d="M0.5 16.5V0.5H8.5L12 4V8" stroke="#d0d0d0"/><path d="M8.5 0.5V4H12" stroke="#d0d0d0"/><path d="M2 4H6M2 6.5H4.5M6 6.5H10M2 9H10M2 11.5H6M2 14H4" stroke="#e69535"/><path d="M7 16.5L8 13L14 7L16 9L10 15Z" fill="#3a82c8"/></svg>
  <svg style="left:1219px;top:338px" width="17" height="18" viewBox="0 0 17 18" fill="none"><path d="M0.5 16.5V0.5H8.5L12 4V6M7 16.5H0.5" stroke="#d0d0d0"/><path d="M8.5 0.5V4H12" stroke="#d0d0d0"/><circle cx="12" cy="8" r="1.5" fill="#3a82c8"/><path d="M8.5 10.5H15.5M12 10V14M10 17.5L12 14L14 17.5" stroke="#3a82c8" stroke-width="1.6"/></svg>
  <svg style="left:1218px;top:366px" width="17" height="17" viewBox="0 0 17 17" fill="none"><circle cx="10.5" cy="6" r="5.2" stroke="#3a82c8" stroke-width="1.3"/><path d="M6.8 9.8L0.8 16" stroke="#3a82c8" stroke-width="1.6"/></svg>
  <!-- FIND BAR -->
  <svg style="left:11px;top:847px" width="15" height="15" viewBox="0 0 15 15"><circle cx="7.5" cy="7.5" r="7.3" fill="#e03232"/><circle cx="7.5" cy="7.5" r="7.3" fill="none" stroke="#a02020" stroke-width="0.6"/><path d="M4.5 4.5L10.5 10.5M10.5 4.5L4.5 10.5" stroke="#3a0a0a" stroke-width="1.3"/></svg>
  <div class="combo" style="left:31px;top:843px;width:200px;height:23px"><div class="dd" style="width:18px"><svg style="left:5px;top:9px" width="8" height="5"><path d="M0.5 0.5L4 4L7.5 0.5" stroke="#bdbdbd" fill="none"/></svg></div></div>
  <div class="t" style="left:34px;top:849px;color:#7a7a7a">Find</div>
  <svg style="left:238px;top:850px" width="15" height="8" viewBox="0 0 15 8" fill="none"><path d="M0.5 7.5L7.5 0.5L14.5 7.5Z" stroke="#d0d0d0" stroke-width="1.1"/></svg>
  <svg style="left:264px;top:850px" width="15" height="8" viewBox="0 0 15 8" fill="none"><path d="M0.5 0.5L7.5 7.5L14.5 0.5Z" stroke="#d0d0d0" stroke-width="1.1"/></svg>
  <div class="t" style="left:286px;top:849px;color:#6e6e6e">Find All</div>
  <div class="a" style="left:333px;top:849px;width:10px;height:10px;border:1px solid #bdbdbd;border-radius:2px"></div>
  <div class="t" style="left:347px;top:849px;color:#ececec;transform:scaleX(0.95);transform-origin:left">Match Case</div>
  <div class="a" style="left:410px;top:849px;width:10px;height:10px;border:1px solid #bdbdbd;border-radius:2px"></div>
  <div class="t" style="left:424px;top:849px;color:#ececec">Match Diacritics</div>
  <div class="sep" style="left:513px;top:846px;height:16px"></div>
  <svg style="left:522px;top:845px" width="19" height="18" viewBox="0 0 19 18" fill="none"><circle cx="11" cy="6" r="5.3" stroke="#d0d0d0" fill="#173a5c"/><path d="M7.5 9.5L1 16" stroke="#e0e0e0" stroke-width="1.6"/><text x="8.3" y="9" font-size="8" fill="#6ab0e8" font-family="Liberation Sans">a</text><text x="12.5" y="17" font-size="8.5" fill="#e0e0e0" font-family="Liberation Sans">d</text></svg>
  <div class="sep" style="left:545px;top:846px;height:16px"></div>
  <!-- STATUS BAR -->
  <div class="a" style="left:1px;top:870px;width:1240px;height:1px;background:#c8c8c8"></div>
  <svg style="left:10px;top:874px" width="13" height="13" viewBox="0 0 13 13" fill="none"><path d="M0.5 0.5H10.5L12.5 2.5V12.5H0.5Z" stroke="#8a8a8a"/><rect x="3" y="0.5" width="6" height="4" stroke="#8a8a8a"/><rect x="3" y="8" width="7" height="4.5" stroke="#8a8a8a"/></svg>
  <div class="sep" style="left:28px;top:872px;height:17px;background:#333"></div>
  <div class="t" style="left:36px;top:876px;color:#ececec">Page 1 of 1</div>
  <div class="sep" style="left:180px;top:872px;height:17px;background:#333"></div>
  <div class="t" style="left:189px;top:876px;color:#ececec;transform:scaleX(0.967);transform-origin:left">37 words, 193 characters</div>
  <div class="sep" style="left:402px;top:872px;height:17px;background:#333"></div>
  <div class="sep" style="left:440px;top:872px;height:17px;background:#333"></div>
  <div class="t" style="left:448px;top:876px;color:#ececec">Default Page Style</div>
  <div class="sep" style="left:629px;top:872px;height:17px;background:#333"></div>
  <div class="t" style="left:675px;top:876px;color:#ececec">English (USA)</div>
  <div class="sep" style="left:792px;top:872px;height:17px;background:#333"></div>
  <div class="sep" style="left:849px;top:872px;height:17px;background:#333"></div>
  <div class="a" style="left:856px;top:878px;width:14px;height:7px;border:1px solid #3a80c2;border-radius:1px"></div>
  <svg style="left:872px;top:875px" width="7" height="13" fill="none"><path d="M0.5 0.5H6.5M3.5 0.5V12.5M0.5 12.5H6.5" stroke="#d8d8d8"/></svg>
  <div class="sep" style="left:885px;top:872px;height:17px;background:#333"></div>
  <div class="sep" style="left:910px;top:872px;height:17px;background:#333"></div>
  <div class="sep" style="left:1010px;top:872px;height:17px;background:#333"></div>
  <svg style="left:1018px;top:875px" width="11" height="13" viewBox="0 0 11 13"><path d="M0 0H7L10.5 3.5V13H0Z" fill="#6aaee8"/></svg>
  <svg style="left:1032px;top:875px" width="21" height="13" viewBox="0 0 21 13" fill="none"><path d="M0.5 0.5H6.5L9.5 3.5V12.5H0.5Z" stroke="#d0d0d0"/><path d="M11.5 0.5H17.5L20.5 3.5V12.5H11.5Z" stroke="#d0d0d0"/></svg>
  <svg style="left:1057px;top:875px" width="20" height="13" viewBox="0 0 20 13" fill="none"><path d="M0.5 3.5L3.5 0.5H9.5V12.5H0.5Z" stroke="#d0d0d0"/><path d="M9.5 0.5H15.5L18.5 3.5V12.5H9.5Z" stroke="#d0d0d0"/></svg>
  <div class="sep" style="left:1082px;top:872px;height:17px;background:#333"></div>
  <div class="a" style="left:1089px;top:881px;width:8px;height:1.5px;background:#f0f0f0"></div>
  <div class="a" style="left:1101px;top:881px;width:79px;height:1.5px;background:#f0f0f0"></div>
  <div class="a" style="left:1121px;top:879px;width:1px;height:5px;background:#f0f0f0"></div>
  <div class="a" style="left:1141px;top:877px;width:3px;height:9px;border:1px solid #d8d8d8;background:#1b1b1b;border-radius:1px"></div>
  <div class="a" style="left:1185px;top:881px;width:8px;height:1.5px;background:#f0f0f0"></div>
  <div class="a" style="left:1188.3px;top:877.7px;width:1.5px;height:8px;background:#f0f0f0"></div>
  <div class="sep" style="left:1197px;top:872px;height:17px;background:#333"></div>
  <div class="t" style="left:1204.5px;top:876px;color:#ececec;transform:scaleX(0.96);transform-origin:left">140%</div>
</div>
</body></html>
